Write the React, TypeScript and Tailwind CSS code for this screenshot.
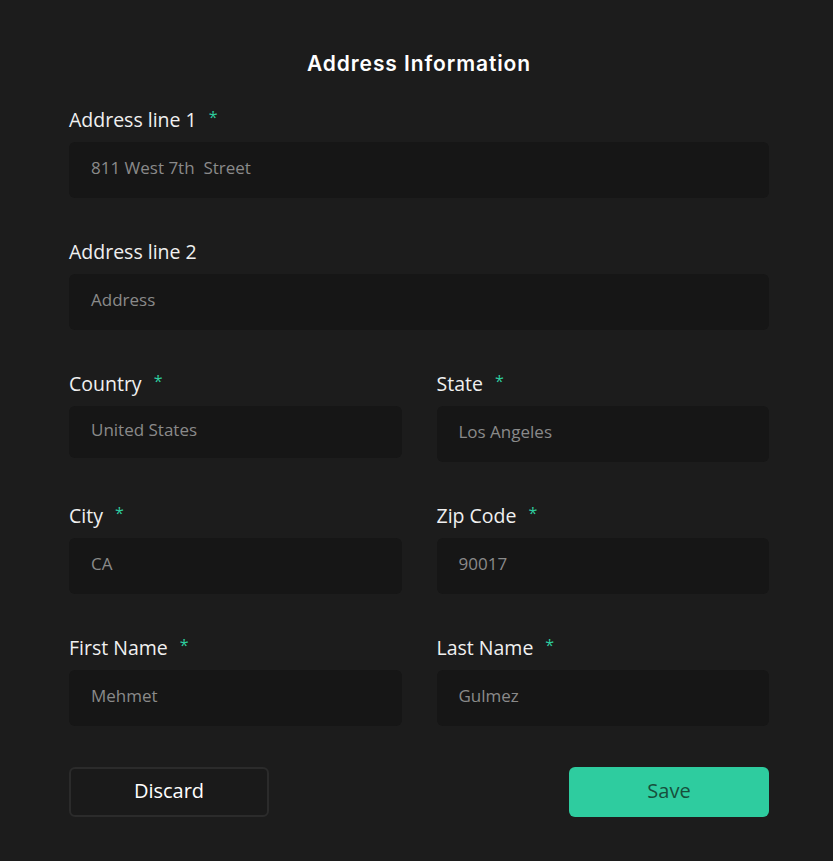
import React from 'react';

type FieldProps = {
  label: string;
  value: string;
  required?: boolean;
  short?: boolean;
};

function Field({ label, value, required, short }: FieldProps) {
  return (
    <div className="flex flex-col">
      <label
        className="flex items-start h-[20px] text-[19.5px] leading-[20px] text-[#f0f0f0] mb-[12px]"
        style={{ fontFamily: '"Open Sans", Lato, sans-serif' }}
      >
        {label}
        {required && <span className="ml-[12px] text-[16px] leading-[14px] text-[#2ecc9f]">*</span>}
      </label>
      <div
        className={`flex items-center rounded-[6px] bg-[#161616] px-[22px] pb-[5px] whitespace-pre text-[17px] text-[#8a8a8a] ${
          short ? 'h-[52px]' : 'h-[56px]'
        }`}
        style={{ fontFamily: '"Open Sans", Lato, sans-serif' }}
      >
        {value}
      </div>
    </div>
  );
}

export default function App() {
  return (
    <div className="min-h-[861px] w-full bg-[#1c1c1c] pl-[69px] pr-[64px] pt-[52px]">
      <h1
        className="text-center text-[21px] leading-[24px] font-semibold tracking-[0.9px] text-white mb-[34px]"
        style={{ fontFamily: 'Inter, "Open Sans", sans-serif' }}
      >
        Address Information
      </h1>

      <div className="flex flex-col gap-[44px]">
        <Field label="Address line 1" value="811 West 7th  Street" required />
        <Field label="Address line 2" value="Address" />
        <div className="grid grid-cols-2 gap-x-[35px] items-start">
          <Field label="Country" value="United States" required short />
          <Field label="State" value="Los Angeles" required />
        </div>
        <div className="grid grid-cols-2 gap-x-[35px]">
          <Field label="City" value="CA" required />
          <Field label="Zip Code" value="90017" required />
        </div>
        <div className="grid grid-cols-2 gap-x-[35px]">
          <Field label="First Name" value="Mehmet" required />
          <Field label="Last Name" value="Gulmez" required />
        </div>
      </div>

      <div
        className="mt-[41px] flex justify-between"
        style={{ fontFamily: '"Open Sans", Lato, sans-serif' }}
      >
        <button className="h-[50px] w-[200px] rounded-[6px] border-2 border-[#2b2b2b] bg-[#1a1a1a] pb-[3px] text-[20px] font-medium text-white">
          Discard
        </button>
        <button className="h-[50px] w-[200px] rounded-[6px] bg-[#2ecc9f] pb-[3px] text-[20px] font-medium text-[#174f3c]">
          Save
        </button>
      </div>
    </div>
  );
}
